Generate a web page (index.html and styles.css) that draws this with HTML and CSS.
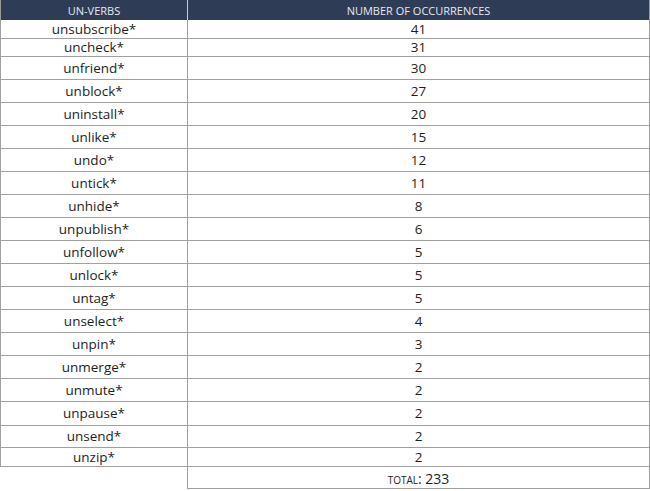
FILE: index.html
```html
<!DOCTYPE html>
<html>
<head>
<meta charset="utf-8">
<link rel="stylesheet" href="styles.css">
</head>
<body>
<table class="verbs">
  <thead>
    <tr><th class="c1">UN-VERBS</th><th class="c2">NUMBER OF OCCURRENCES</th></tr>
  </thead>
  <tbody>
    <tr class="r18"><td>unsubscribe*</td><td>41</td></tr>
    <tr class="r18"><td>uncheck*</td><td>31</td></tr>
    <tr class="r23"><td>unfriend*</td><td>30</td></tr>
    <tr class="r23"><td>unblock*</td><td>27</td></tr>
    <tr class="r23"><td>uninstall*</td><td>20</td></tr>
    <tr class="r23"><td>unlike*</td><td>15</td></tr>
    <tr class="r23"><td>undo*</td><td>12</td></tr>
    <tr class="r23"><td>untick*</td><td>11</td></tr>
    <tr class="r23"><td>unhide*</td><td>8</td></tr>
    <tr class="r23"><td>unpublish*</td><td>6</td></tr>
    <tr class="r23"><td>unfollow*</td><td>5</td></tr>
    <tr class="r23"><td>unlock*</td><td>5</td></tr>
    <tr class="r23"><td>untag*</td><td>5</td></tr>
    <tr class="r23"><td>unselect*</td><td>4</td></tr>
    <tr class="r23"><td>unpin*</td><td>3</td></tr>
    <tr class="r23"><td>unmerge*</td><td>2</td></tr>
    <tr class="r23"><td>unmute*</td><td>2</td></tr>
    <tr class="r24"><td>unpause*</td><td>2</td></tr>
    <tr class="r22"><td>unsend*</td><td>2</td></tr>
    <tr class="r19"><td>unzip*</td><td>2</td></tr>
    <tr class="total"><td class="blank"></td><td><span class="sc">total</span>: 233</td></tr>
  </tbody>
</table>
</body>
</html>
```
FILE: styles.css
```css
html, body {
  margin: 0;
  padding: 0;
  background: #ffffff;
}
.verbs {
  border-collapse: collapse;
  table-layout: fixed;
  width: 650px;
  font-family: "Open Sans", "Noto Sans", sans-serif;
  color: #1e1e1e;
}
.verbs th {
  background: #2f3c56;
  color: #e6e9ef;
  font-weight: normal;
  font-size: 11px;
  height: 20px;
  padding: 0;
  text-align: center;
  box-sizing: border-box;
  border-right: 1px solid #9a9a9a;
}
.verbs th.c1 {
  width: 187px;
  border-left: 1px solid #9a9a9a;
  border-right: 1px solid #c8ccd4;
}
.verbs th.c2 {
  width: 462px;
}
.verbs td {
  border: 1px solid #a0a0a0;
  border-top: 0;
  padding: 0;
  text-align: center;
  font-size: 13.5px;
  line-height: 16px;
  box-sizing: border-box;
}
.r18 td { height: 18px; }
.r19 td { height: 19px; }
.r22 td { height: 22px; }
.r23 td { height: 23px; }
.r24 td { height: 24px; }
.total td { height: 22px; vertical-align: bottom; padding-bottom: 1px; font-size: 14px; }
.total td.blank { border: 0; border-right: 1px solid #a0a0a0; }
.sc { font-variant: small-caps; }
```
